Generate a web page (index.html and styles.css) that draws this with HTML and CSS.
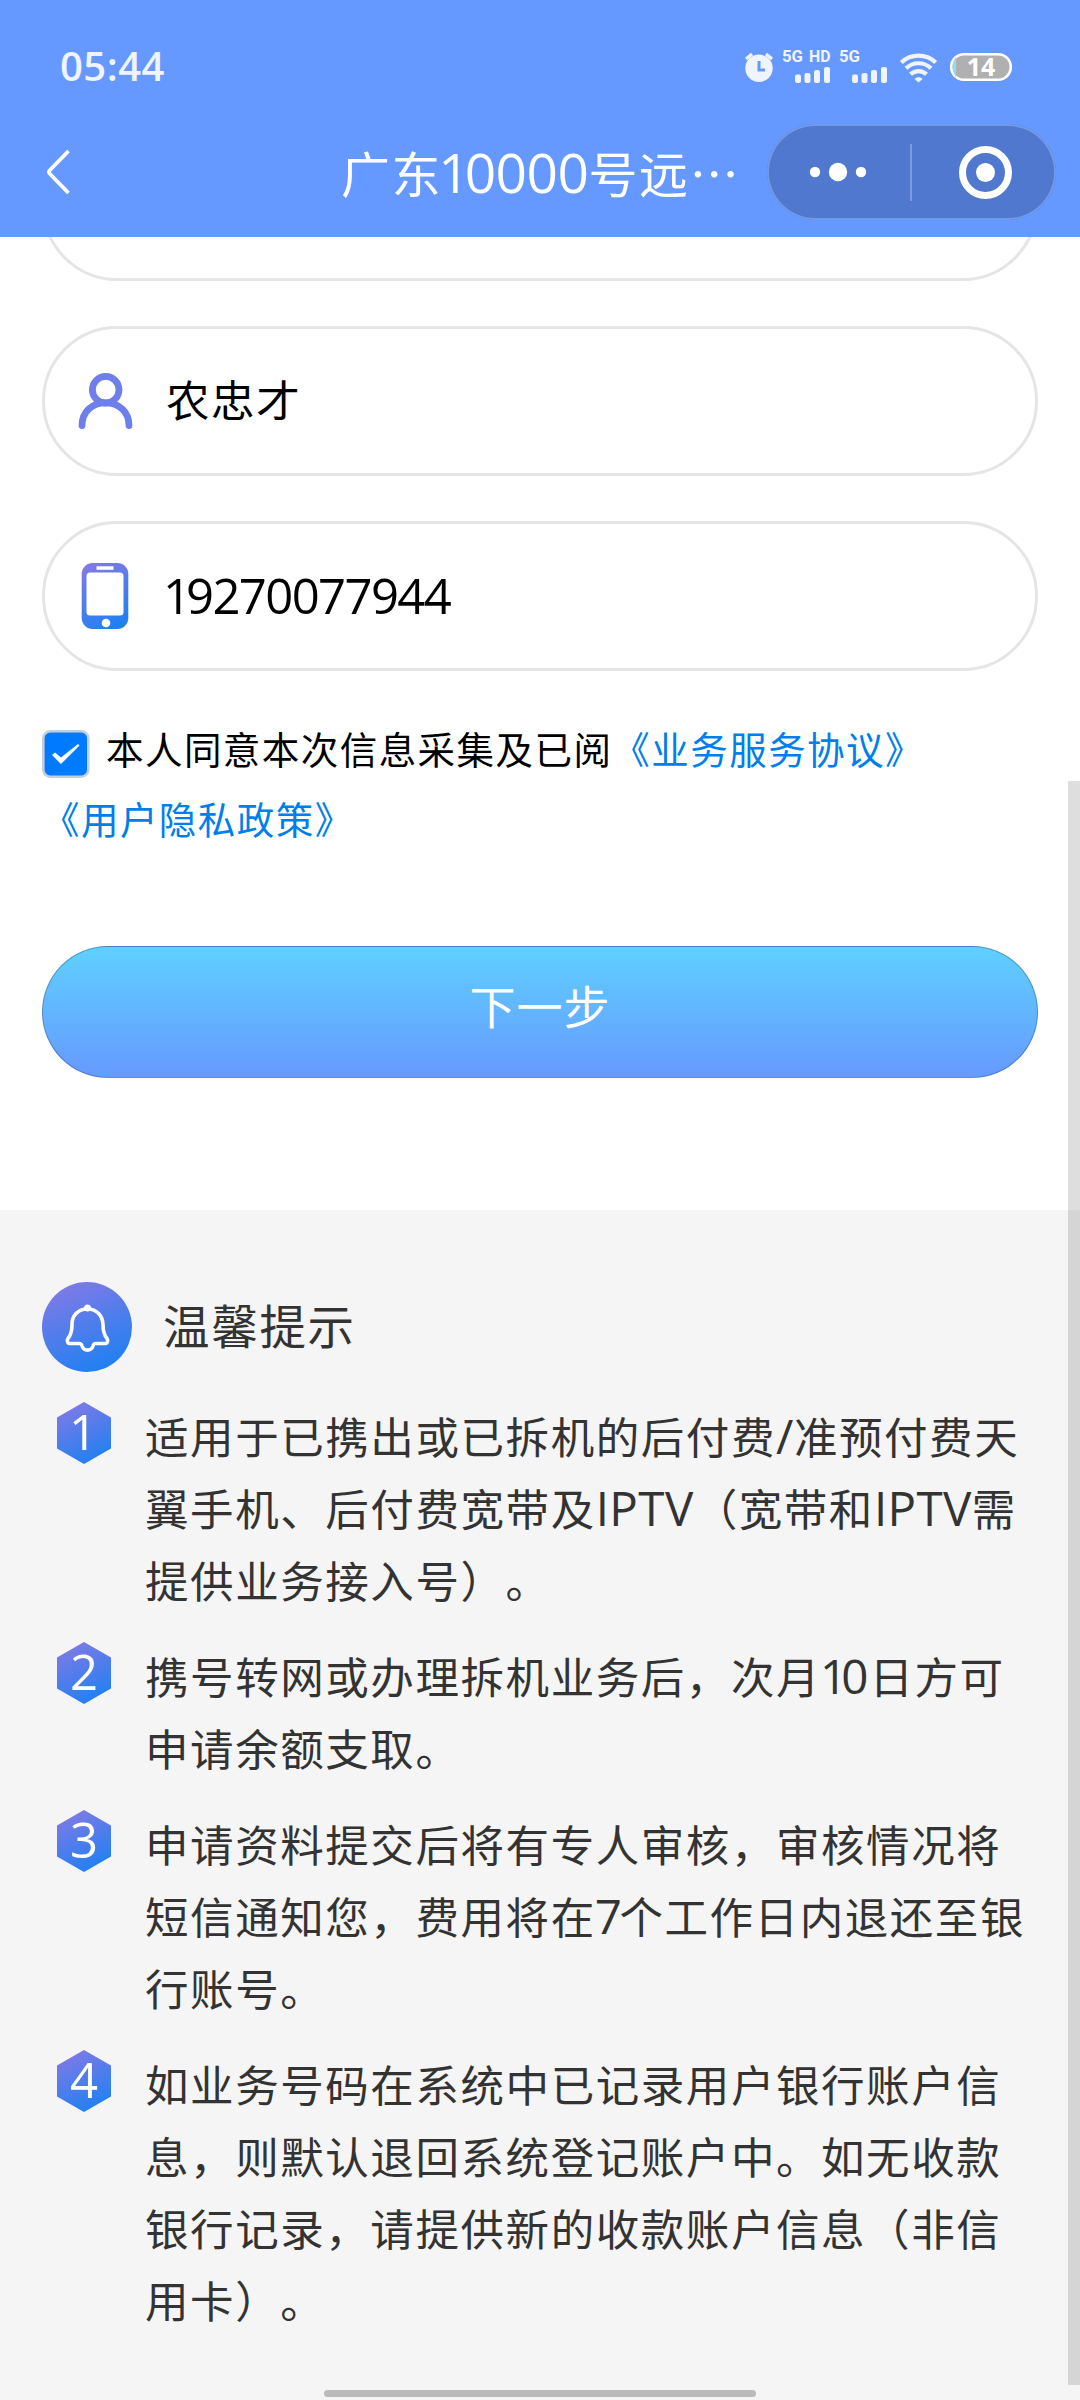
FILE: index.html
```html
<!DOCTYPE html>
<html lang="zh-CN">
<head>
<meta charset="utf-8">
<title>温馨提示</title>
<link rel="stylesheet" href="styles.css">
</head>
<body>
<svg class="defs" width="0" height="0">
  <defs>
    <linearGradient id="violet" x1="0.3" y1="0" x2="0.7" y2="1">
      <stop offset="0" stop-color="#7f7ae6"/>
      <stop offset="1" stop-color="#1d80f2"/>
    </linearGradient>
  </defs>
</svg>
<div class="screen">
  <header class="header">
    <div class="status">
      <span class="clock">05:44</span>
      <svg class="status-icons" width="280" height="56" viewBox="740 38 280 56">
        <g fill="#eff4ff">
          <circle cx="759" cy="68.3" r="13.7"/>
          <path d="M746 59l6-5M772 59l-6-5" stroke="#eff4ff" stroke-width="3.4"/>
          <path d="M759 61v9h6" fill="none" stroke="#6699ff" stroke-width="3"/>
          <g class="net">
            <text x="782" y="62" textLength="21" lengthAdjust="spacingAndGlyphs">5G</text>
            <text x="809" y="62" textLength="21.5" lengthAdjust="spacingAndGlyphs">HD</text>
            <text x="839" y="62" textLength="21" lengthAdjust="spacingAndGlyphs">5G</text>
          </g>
          <g id="bars">
            <rect x="795" y="74.500" width="6" height="8.500" rx="2"/>
            <rect x="804.500" y="73" width="6" height="10" rx="2"/>
            <rect x="814" y="70" width="6" height="13" rx="2"/>
            <rect x="824" y="67" width="6" height="16" rx="2"/>
          </g>
          <use href="#bars" x="57"/>
          <path d="M914.500 79l4 3.500 4-3.500c-2-2.500-6-2.500-8 0z"/>
        </g>
        <g fill="none" stroke="#eff4ff" stroke-width="4.200">
          <path d="M901.300 62.500a25 25 0 0 1 34.400 0"/>
          <path d="M906 68.300a18 18 0 0 1 25 0"/>
          <path d="M910.500 74.300a11.500 11.500 0 0 1 16 0"/>
        </g>
        <rect x="951.200" y="54.200" width="59.600" height="25.600" rx="12.800" fill="#b0b0b0" stroke="#fff" stroke-width="2.600"/>
        <path d="M956 56.500q-7 10.500 0 21z" fill="#8edcf8"/>
        <text class="battery" x="981" y="75.800" text-anchor="middle">14</text>
      </svg>
    </div>
    <div class="nav">
      <svg class="back" width="26" height="50" viewBox="0 0 26 50"><path d="M23.500 4L5 23q-2 2 0 4l18.500 19" fill="none" stroke="#fff" stroke-width="3.800"/></svg>
      <h1 class="title">广东<span class="title-num"><span class="title-one">1</span>0000</span>号远…</h1>
      <div class="capsule">
        <svg width="289" height="96" viewBox="767 124 289 96">
          <g fill="#fff">
            <circle cx="815" cy="172" r="5.200"/><circle cx="838" cy="172" r="9.200"/><circle cx="861" cy="172" r="5.200"/>
            <circle cx="985.500" cy="172.500" r="9.500"/>
          </g>
          <path d="M911 144v57" stroke="#7c9ade" stroke-width="2"/>
          <circle cx="985.500" cy="172.500" r="23" fill="none" stroke="#fff" stroke-width="7"/>
        </svg>
      </div>
    </div>
  </header>

  <main class="page">
    <section class="form">
      <div class="field field-cut"></div>
      <div class="field">
        <svg class="field-icon" width="60" height="72" viewBox="75 365 60 72">
          <g fill="none" stroke="#6e7eea" stroke-width="6.800">
            <circle cx="105.700" cy="389.700" r="13.300"/>
            <path d="M82 425.500C82 411.500 92 402.800 105.500 402.800S129 411.500 129 425.500" stroke-linecap="round"/>
          </g>
        </svg>
        <span class="name">农忠才</span>
      </div>
      <div class="field">
        <svg class="field-icon" width="60" height="72" viewBox="75 560 60 72">
          <rect x="81.700" y="563" width="46.600" height="66" rx="11" fill="url(#violet)"/>
          <rect x="86.500" y="572.500" width="37" height="43" rx="3.500" fill="#fff"/>
          <rect x="96.500" y="566.300" width="17" height="3.500" fill="#fff"/>
          <circle cx="106" cy="623" r="4.300" fill="#fff"/>
        </svg>
        <span class="phone"><span class="phone-one">1</span>9270077944</span>
      </div>
      <div class="agree">
        <svg class="check" width="48" height="48" viewBox="0 0 48 48">
          <rect x="1.300" y="1.300" width="45" height="45.400" rx="7" fill="#007aff" stroke="#c5cfdb" stroke-width="2.600"/>
          <path d="M10 25l3-2.500 6 5L36 14l1.500 1.500L19 34z" fill="#fff"/>
        </svg>
        <span class="agree-text">本人同意本次信息采集及已阅<a class="link">《业务服务协议》</a></span>
      </div>
      <div class="agree"><a class="link agree-text">《用户隐私政策》</a></div>
      <button class="next">下一步</button>
    </section>

    <section class="tips">
      <div class="tips-head">
        <svg width="90" height="90" viewBox="0 0 90 90">
          <circle cx="45" cy="45" r="45" fill="url(#violet)"/>
          <path d="M45.500 27c-10 0-15.500 7-15.500 15.500 0 7-1 10.500-4 14-1 1.500-1 4.500 1 5h10.500c1.500 0 2 1 2.500 2.500 2 5.500 9 5.500 11 0 .5-1.500 1-2.500 2.500-2.500h10.500c2-.5 2-3.500 1-5-3-3.500-4-7-4-14C60.500 34 55 27 45.500 27z" fill="none" stroke="#fff" stroke-width="3.600" stroke-linejoin="round"/>
          <circle cx="45.500" cy="26" r="3.500" fill="#fff"/>
        </svg>
        <h2>温馨提示</h2>
      </div>
      <ol class="list">
        <li>
          <svg class="hex" width="54" height="62" viewBox="0 0 54 62"><path d="M27 0l27 15.500v31L27 62 0 46.500v-31z" fill="url(#violet)"/><text x="26" y="47.500">1</text></svg>
          <p>适用于已携出或已拆机的后付费<span class="slash">/</span>准预付费天<br>翼手机、后付费宽带及<span class="latin">IPTV</span>（宽带和<span class="latin">IPTV</span>需<br>提供业务接入号）。</p>
        </li>
        <li>
          <svg class="hex" width="54" height="62" viewBox="0 0 54 62"><path d="M27 0l27 15.500v31L27 62 0 46.500v-31z" fill="url(#violet)"/><text x="27" y="47.500">2</text></svg>
          <p>携号转网或办理拆机业务后，次月<span class="digits"><span class="one">1</span>0</span>日方可<br>申请余额支取。</p>
        </li>
        <li>
          <svg class="hex" width="54" height="62" viewBox="0 0 54 62"><path d="M27 0l27 15.500v31L27 62 0 46.500v-31z" fill="url(#violet)"/><text x="27" y="47.500">3</text></svg>
          <p>申请资料提交后将有专人审核，审核情况将<br>短信通知您，费用将在<span class="digits seven">7</span>个工作日内退还至银<br>行账号。</p>
        </li>
        <li>
          <svg class="hex" width="54" height="62" viewBox="0 0 54 62"><path d="M27 0l27 15.500v31L27 62 0 46.500v-31z" fill="url(#violet)"/><text x="27" y="47.500">4</text></svg>
          <p>如业务号码在系统中已记录用户银行账户信<br>息，则默认退回系统登记账户中。如无收款<br>银行记录，请提供新的收款账户信息（非信<br>用卡）。</p>
        </li>
      </ol>
    </section>
  </main>
  <div class="scrollbar"></div>
  <div class="home-bar"></div>
</div>
</body>
</html>
```
FILE: styles.css
```css
* { box-sizing: border-box; margin: 0; padding: 0; }
body {
  width: 1080px;
  font-family: "Noto Sans CJK SC", sans-serif;
  font-weight: 400;
  font-kerning: none;
  text-spacing-trim: space-all;
  color: #000;
  background: #fff;
}
svg { overflow: visible; }
.defs { position: absolute; }
.screen {
  position: relative;
  display: flex;
  flex-direction: column;
  width: 1080px;
  height: 2400px;
  overflow: hidden;
}
.header {
  flex: none;
  height: 237px;
  padding-top: 46px;
  background: #6699ff;
  color: #fff;
}
.status {
  display: flex;
  justify-content: space-between;
  align-items: center;
  height: 40px;
  padding: 0 60px 0 60px;
}
.clock {
  font-family: "Open Sans", sans-serif;
  font-size: 40px;
  line-height: 40px;
  font-weight: 600;
  letter-spacing: 0.500px;
  color: #eff4ff;
}
.net { font-family: Roboto, sans-serif; font-size: 17px; font-weight: 700; }
.battery { font-family: "Open Sans", sans-serif; font-size: 25px; font-weight: 700; fill: #fff; }
.nav {
  display: flex;
  align-items: center;
  height: 96px;
  margin-top: 38px;
  padding: 0 24px 0 45px;
}
.back { flex: none; }
.title {
  flex: none;
  width: 426px;
  margin-left: 270px;
  font-size: 49px;
  line-height: 96px;
  font-weight: 400;
  letter-spacing: 1.600px;
  white-space: nowrap;
}
.title-num {
  margin-left: -4px;
  font-family: "Open Sans", sans-serif;
  font-size: 55px;
  line-height: 60px;
  letter-spacing: -0.500px;
}
.title-one { letter-spacing: -5px; }
.capsule {
  flex: none;
  width: 289px;
  height: 96px;
  border-radius: 48px;
  background: #5078ce;
  box-shadow: inset 0 0 0 2px #7298e8;
}
.capsule svg { display: block; }
.page { flex: 1; overflow: hidden; }
.form {
  height: 973px;
  padding: 0 42px;
  overflow: hidden;
}
.field {
  display: flex;
  align-items: center;
  height: 150px;
  margin-bottom: 45px;
  padding-left: 30px;
  border: 3px solid #e5e5e5;
  border-radius: 75px;
}
.field-cut { margin-top: -106px; }
.field-icon { flex: none; margin-right: 31px; }
.name { margin-bottom: 6px; font-size: 43.500px; letter-spacing: 1.600px; }
.phone {
  margin: 0 0 2px -3px;
  font-family: "Open Sans", sans-serif;
  font-size: 49px;
  letter-spacing: -1.600px;
}
.phone-one { letter-spacing: -5px; }
.agree {
  display: flex;
  align-items: center;
  height: 70px;
  font-size: 37.500px;
  letter-spacing: 1.450px;
  white-space: nowrap;
}
.agree-text { margin-bottom: 7px; }
.check { flex: none; margin: 6px 16px 0 0; }
.link { color: #007fea; }
.next {
  display: block;
  width: 996px;
  height: 132px;
  margin-top: 90px;
  padding-bottom: 16px;
  border: 1px solid rgba(40, 80, 130, 0.4);
  border-radius: 66px;
  background: linear-gradient(#5fd0ff, #6699ff);
  color: #fff;
  font: inherit;
  font-size: 46px;
  letter-spacing: 1px;
}
.tips {
  height: 1190px;
  padding: 72px 0 0 42px;
  background: #f5f5f5;
  color: #333;
}
.tips-head { display: flex; align-items: center; height: 90px; }
.tips-head h2 {
  margin: 0 0 7px 31px;
  font-size: 46.500px;
  font-weight: 400;
  letter-spacing: 1.700px;
}
.list { margin-top: 28px; list-style: none; }
.list li { display: flex; margin-bottom: 24px; padding-left: 15px; }
.hex { flex: none; margin: 2px 34px 0 0; }
.hex text {
  font-family: "Open Sans", sans-serif;
  font-size: 49px;
  fill: #fff;
  text-anchor: middle;
}
.list p {
  font-size: 43.500px;
  line-height: 72px;
  letter-spacing: 1.570px;
  white-space: nowrap;
}
.slash, .latin, .digits {
  font-family: "Open Sans", sans-serif;
  font-size: 47.500px;
  line-height: 60px;
  letter-spacing: 0;
}
.slash { letter-spacing: 0.500px; }
.latin { letter-spacing: 0.400px; }
.digits { margin-left: -1px; margin-right: 1px; }
.one { letter-spacing: -6px; }
.seven { letter-spacing: -3.500px; }
.scrollbar {
  position: absolute;
  top: 781px;
  right: 0;
  width: 12px;
  height: 1604px;
  background: rgba(0, 0, 0, 0.13);
}
.home-bar {
  position: absolute;
  left: 324px;
  top: 2390px;
  width: 432px;
  height: 7px;
  border-radius: 4px;
  background: #bbb;
}
```
